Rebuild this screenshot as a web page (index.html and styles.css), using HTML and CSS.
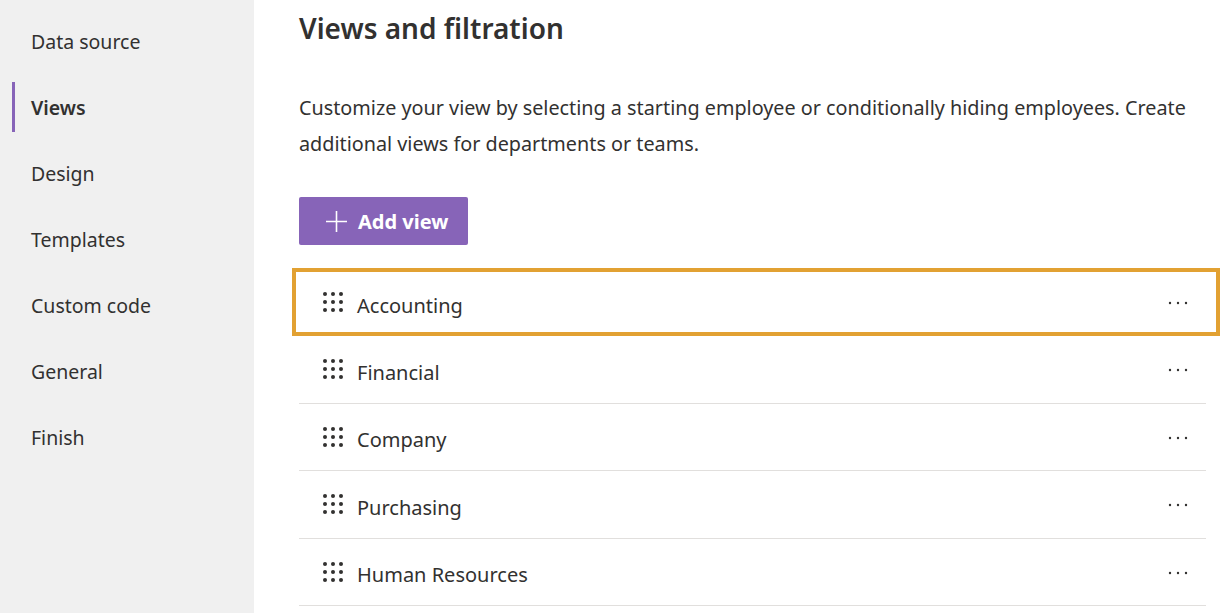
FILE: index.html
```html
<!DOCTYPE html>
<html lang="en">
<head>
  <meta charset="UTF-8">
  <meta name="viewport" content="width=device-width, initial-scale=1.0">
  <title>Views and filtration</title>
  <link rel="stylesheet" href="styles.css">
</head>
<body>
  <div class="app">
    <!-- Wizard steps -->
    <nav class="steps">
      <a class="step">Data source</a>
      <a class="step active">Views</a>
      <a class="step">Design</a>
      <a class="step">Templates</a>
      <a class="step">Custom code</a>
      <a class="step">General</a>
      <a class="step">Finish</a>
    </nav>

    <main class="content">
      <h1>Views and filtration</h1>
      <p class="intro">Customize your view by selecting a starting employee or conditionally hiding employees. Create additional views for departments or teams.</p>

      <button class="add-btn">
        <svg width="21" height="21" viewBox="0 0 21 21"><path d="M10.5 0v21M0 10.5h21" stroke="#fff" stroke-width="1.6" fill="none"/></svg>
        Add view
      </button>

      <ul class="view-list">
        <li class="view-row selected">
          <svg class="grip" width="20" height="20" viewBox="0 0 20 20"><g fill="#323130"><circle cx="2" cy="2" r="2"/><circle cx="10" cy="2" r="2"/><circle cx="18" cy="2" r="2"/><circle cx="2" cy="10" r="2"/><circle cx="10" cy="10" r="2"/><circle cx="18" cy="10" r="2"/><circle cx="2" cy="18" r="2"/><circle cx="10" cy="18" r="2"/><circle cx="18" cy="18" r="2"/></g></svg>
          <span class="name">Accounting</span>
          <svg class="more" width="20" height="4" viewBox="0 0 20 4"><g fill="#323130"><circle cx="2" cy="2" r="1.2"/><circle cx="10" cy="2" r="1.2"/><circle cx="18" cy="2" r="1.2"/></g></svg>
        </li>
        <li class="view-row">
          <svg class="grip" width="20" height="20" viewBox="0 0 20 20"><g fill="#323130"><circle cx="2" cy="2" r="2"/><circle cx="10" cy="2" r="2"/><circle cx="18" cy="2" r="2"/><circle cx="2" cy="10" r="2"/><circle cx="10" cy="10" r="2"/><circle cx="18" cy="10" r="2"/><circle cx="2" cy="18" r="2"/><circle cx="10" cy="18" r="2"/><circle cx="18" cy="18" r="2"/></g></svg>
          <span class="name">Financial</span>
          <svg class="more" width="20" height="4" viewBox="0 0 20 4"><g fill="#323130"><circle cx="2" cy="2" r="1.2"/><circle cx="10" cy="2" r="1.2"/><circle cx="18" cy="2" r="1.2"/></g></svg>
        </li>
        <li class="view-row">
          <svg class="grip" width="20" height="20" viewBox="0 0 20 20"><g fill="#323130"><circle cx="2" cy="2" r="2"/><circle cx="10" cy="2" r="2"/><circle cx="18" cy="2" r="2"/><circle cx="2" cy="10" r="2"/><circle cx="10" cy="10" r="2"/><circle cx="18" cy="10" r="2"/><circle cx="2" cy="18" r="2"/><circle cx="10" cy="18" r="2"/><circle cx="18" cy="18" r="2"/></g></svg>
          <span class="name">Company</span>
          <svg class="more" width="20" height="4" viewBox="0 0 20 4"><g fill="#323130"><circle cx="2" cy="2" r="1.2"/><circle cx="10" cy="2" r="1.2"/><circle cx="18" cy="2" r="1.2"/></g></svg>
        </li>
        <li class="view-row">
          <svg class="grip" width="20" height="20" viewBox="0 0 20 20"><g fill="#323130"><circle cx="2" cy="2" r="2"/><circle cx="10" cy="2" r="2"/><circle cx="18" cy="2" r="2"/><circle cx="2" cy="10" r="2"/><circle cx="10" cy="10" r="2"/><circle cx="18" cy="10" r="2"/><circle cx="2" cy="18" r="2"/><circle cx="10" cy="18" r="2"/><circle cx="18" cy="18" r="2"/></g></svg>
          <span class="name">Purchasing</span>
          <svg class="more" width="20" height="4" viewBox="0 0 20 4"><g fill="#323130"><circle cx="2" cy="2" r="1.2"/><circle cx="10" cy="2" r="1.2"/><circle cx="18" cy="2" r="1.2"/></g></svg>
        </li>
        <li class="view-row">
          <svg class="grip" width="20" height="20" viewBox="0 0 20 20"><g fill="#323130"><circle cx="2" cy="2" r="2"/><circle cx="10" cy="2" r="2"/><circle cx="18" cy="2" r="2"/><circle cx="2" cy="10" r="2"/><circle cx="10" cy="10" r="2"/><circle cx="18" cy="10" r="2"/><circle cx="2" cy="18" r="2"/><circle cx="10" cy="18" r="2"/><circle cx="18" cy="18" r="2"/></g></svg>
          <span class="name">Human Resources</span>
          <svg class="more" width="20" height="4" viewBox="0 0 20 4"><g fill="#323130"><circle cx="2" cy="2" r="1.2"/><circle cx="10" cy="2" r="1.2"/><circle cx="18" cy="2" r="1.2"/></g></svg>
        </li>
      </ul>
    </main>
  </div>
</body>
</html>
```

FILE: styles.css
```css
body {
  margin: 0;
  font-family: 'Noto Sans', 'Open Sans', sans-serif;
  color: #323130;
  background: #fff;
  overflow: hidden;
}

.app {
  display: flex;
  height: 613px;
}

/* Left steps */
.steps {
  width: 254px;
  flex-shrink: 0;
  background: #f0f0f0;
  display: flex;
  flex-direction: column;
  gap: 16px;
  padding-top: 16px;
  padding-left: 12px;
  box-sizing: border-box;
}

.step {
  height: 50px;
  display: flex;
  align-items: center;
  padding-left: 19px;
  border-left: 3px solid transparent;
  margin-left: -3px;
  font-size: 19.5px;
  cursor: pointer;
}

.step.active {
  margin-left: 0;
  padding-left: 16px;
  border-left-color: #8764b8;
  font-weight: 600;
}

/* Main */
.content {
  flex: 1;
  padding-left: 45px;
  padding-right: 23px;
}

.content h1 {
  margin: 9px 0 0;
  font-size: 28px;
  font-weight: 600;
  line-height: 38px;
}

.intro {
  margin: 43px 0 0;
  font-size: 19.8px;
  line-height: 36px;
}

.add-btn {
  margin-top: 35px;
  width: 169px;
  height: 48px;
  background: #8764b8;
  color: #fff;
  border: none;
  border-radius: 2px;
  font-family: inherit;
  font-size: 20px;
  font-weight: 700;
  display: flex;
  align-items: center;
  gap: 11px;
  padding-left: 27px;
}

.view-list {
  list-style: none;
  margin: 23px 0 0;
  padding: 0;
  width: 907px;
}

.view-row {
  height: 67.5px;
  display: flex;
  align-items: center;
  padding-left: 24px;
  padding-right: 18px;
  border-bottom: 1px solid #e1dfdd;
  box-sizing: border-box;
  font-size: 20px;
}

.view-row .name {
  margin-left: 14px;
  flex: 1;
  padding-top: 6px;
}

.view-row .more {
  margin-top: 2px;
}

.view-row.selected {
  height: 68px;
  margin: 0 -14px 0 -7px;
  border: 4px solid #e2a132;
  padding-left: 27px;
  padding-right: 28px;
}
```
